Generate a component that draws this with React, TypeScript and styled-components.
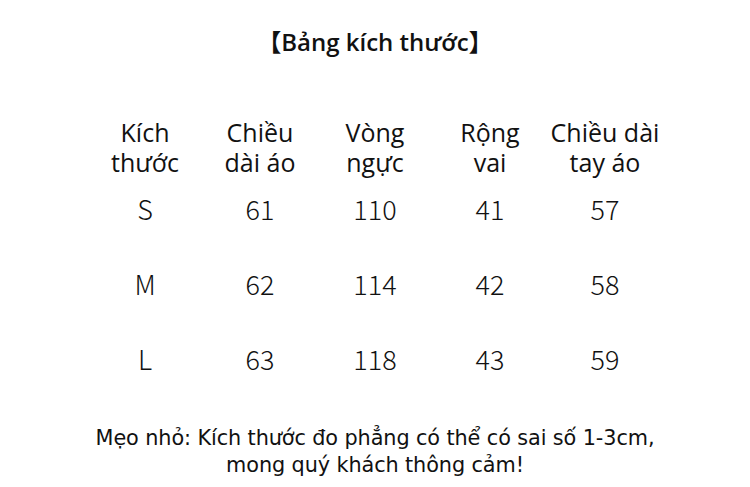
import React from "react"
import styled, { createGlobalStyle } from "styled-components"

const GlobalStyle = createGlobalStyle`
	html, body {
		margin: 0;
		padding: 0;
		background: #ffffff;
	}
`

const headers = ["Kích\nthước", "Chiều\ndài áo", "Vòng\nngực", "Rộng\nvai", "Chiều dài\ntay áo"]

const rows = [
	["S", "61", "110", "41", "57"],
	["M", "62", "114", "42", "58"],
	["L", "63", "118", "43", "59"],
]

export default function App() {
	return (
		<>
			<GlobalStyle />
			<Page>
				<Title>【Bảng kích thước】</Title>
				<Table>
					{headers.map((h) => (
						<HeadCell key={h}>{h}</HeadCell>
					))}
					{rows.map((r) =>
						r.map((v, i) => <ValueCell key={`${r[0]}-${i}`}>{v}</ValueCell>)
					)}
				</Table>
				<Note>
					Mẹo nhỏ: Kích thước đo phẳng có thể có sai số 1-3cm,
					<br />
					mong quý khách thông cảm!
				</Note>
			</Page>
		</>
	)
}

const Page = styled.div`
	width: 750px;
	height: 487px;
	display: flex;
	flex-direction: column;
	align-items: center;
	color: #111111;
	box-sizing: border-box;
	padding-top: 27px;
`
const Title = styled.div`
	font-family: "Open Sans", "Noto Sans CJK SC", sans-serif;
	font-size: 24px;
	font-weight: 600;
	line-height: 30px;
`
const Table = styled.div`
	margin-top: 60px;
	display: grid;
	grid-template-columns: repeat(5, 115px);
	grid-template-rows: 62px repeat(3, 75px);
`
const HeadCell = styled.div`
	white-space: pre-line;
	text-align: center;
	font-family: "Open Sans", sans-serif;
	font-size: 25px;
	line-height: 30px;
`
const ValueCell = styled.div`
	text-align: center;
	font-family: "Noto Sans CJK SC", sans-serif;
	font-weight: 300;
	font-size: 27px;
	line-height: 40px;
	padding-top: 10px;
`
const Note = styled.div`
	margin-top: 21px;
	text-align: center;
	font-family: "DejaVu Sans", sans-serif;
	font-size: 20.8px;
	line-height: 27px;
	letter-spacing: -0.1px;
`
